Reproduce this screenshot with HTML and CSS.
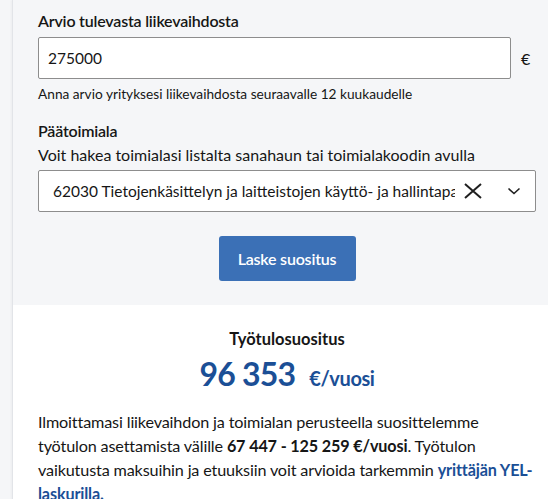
FILE: index.html
```html
<!DOCTYPE html>
<html lang="fi">
<head>
  <meta charset="UTF-8" />
  <meta name="viewport" content="width=device-width, initial-scale=1.0"/>
  <title>Työtulosuositus</title>
  <link rel="stylesheet" href="styles.css">
</head>
<body>

<div class="card">
  <div class="form-panel">
    <label class="field-label" for="turnover">Arvio tulevasta liikevaihdosta</label>
    <div class="input-row">
      <input id="turnover" class="text-input" type="text" value="275000">
      <span class="unit">€</span>
    </div>
    <p class="hint">Anna arvio yrityksesi liikevaihdosta seuraavalle 12 kuukaudelle</p>

    <div class="field-label industry-label">Päätoimiala</div>
    <p class="description">Voit hakea toimialasi listalta sanahaun tai toimialakoodin avulla</p>
    <div class="select">
      <span class="select-value">62030 Tietojenkäsittelyn ja laitteistojen käyttö- ja hallintapalvelut</span>
      <svg class="clear-icon" width="20" height="16" viewBox="0 0 20 16">
        <path d="M2 1 L18 15 M18 1 L2 15" stroke="#1f1f1f" stroke-width="2" fill="none"/>
      </svg>
      <svg class="chevron" width="14" height="8" viewBox="0 0 14 8">
        <path d="M1.5 1.5 L7 6.5 L12.5 1.5" stroke="#1f1f1f" stroke-width="1.6" fill="none"/>
      </svg>
    </div>

    <div class="actions">
      <button class="primary">Laske suositus</button>
    </div>
  </div>

  <div class="result">
    <h3 class="result-title">Työtulosuositus</h3>
    <div class="result-value">96 353<span class="per-year">€/vuosi</span></div>
    <p class="result-text">
      Ilmoittamasi liikevaihdon ja toimialan perusteella suosittelemme
      työtulon asettamista välille <strong>67 447 - 125 259 €/vuosi</strong>. Työtulon
      vaikutusta maksuihin ja etuuksiin voit arvioida tarkemmin <a href="#">yrittäjän YEL-laskurilla.</a>
    </p>
  </div>
</div>

</body>
</html>
```

FILE: styles.css
```css
* {
  box-sizing: border-box;
}

body {
  margin: 0;
  font-family: Lato, 'Noto Sans', sans-serif;
  background: #f5f6f8;
  color: #161616;
  overflow: hidden;
}

.card {
  margin-left: 12px;
  width: 549px;
  border-left: 1px solid #e2e4e8;
  box-shadow: -1px 0 2px rgba(0, 0, 0, 0.04);
}

.form-panel {
  background: #f5f6f8;
  padding: 9px 25px 24px;
}

.field-label {
  display: block;
  font-size: 16px;
  font-weight: 600;
  letter-spacing: -0.2px;
  line-height: 24px;
  margin-bottom: 4px;
}

.input-row {
  display: flex;
  align-items: center;
  gap: 10px;
}

.text-input {
  width: 473px;
  height: 42px;
  padding: 0 9px;
  border: 1px solid #8d8d8d;
  border-radius: 2px;
  background: #fff;
  font-family: inherit;
  font-size: 15.5px;
  color: #161616;
}

.unit {
  font-size: 16px;
}

.hint {
  margin: 5px 0 0;
  font-size: 13.7px;
  line-height: 20px;
}

.industry-label {
  margin-top: 15px;
  margin-bottom: 0;
}

.description {
  margin: 0 0 3px;
  font-size: 16px;
  line-height: 24px;
}

.select {
  display: flex;
  align-items: center;
  width: 498px;
  height: 42px;
  padding: 0 14px;
  border: 1px solid #8d8d8d;
  border-radius: 2px;
  background: #fff;
}

.select-value {
  flex: 1;
  overflow: hidden;
  white-space: nowrap;
  font-size: 15.5px;
}

.clear-icon {
  margin-left: 8px;
  flex-shrink: 0;
}

.chevron {
  margin-left: 24px;
  flex-shrink: 0;
}

.actions {
  display: flex;
  justify-content: center;
  margin-top: 24px;
}

button.primary {
  width: 137px;
  height: 45px;
  border: none;
  border-radius: 3px;
  background: #3b70b6;
  color: #fff;
  font-family: inherit;
  font-size: 16px;
  font-weight: 600;
  letter-spacing: -0.2px;
  cursor: pointer;
}

.result {
  background: #fff;
  padding: 22px 25px 30px;
}

.result-title {
  margin: 0;
  text-align: center;
  font-size: 16.5px;
  font-weight: 700;
  line-height: 24px;
}

.result-value {
  margin-top: 3px;
  text-align: center;
  font-size: 32px;
  font-weight: 700;
  letter-spacing: -0.8px;
  line-height: 40px;
  color: #1b4f96;
}

.per-year {
  margin-left: 14px;
  font-size: 20px;
  letter-spacing: -0.4px;
}

.result-text {
  margin: 12px 0 0;
  font-size: 16.2px;
  letter-spacing: -0.15px;
  line-height: 24px;
}

.result-text a {
  color: #1b4f96;
  font-weight: 700;
  text-decoration: none;
}
```
